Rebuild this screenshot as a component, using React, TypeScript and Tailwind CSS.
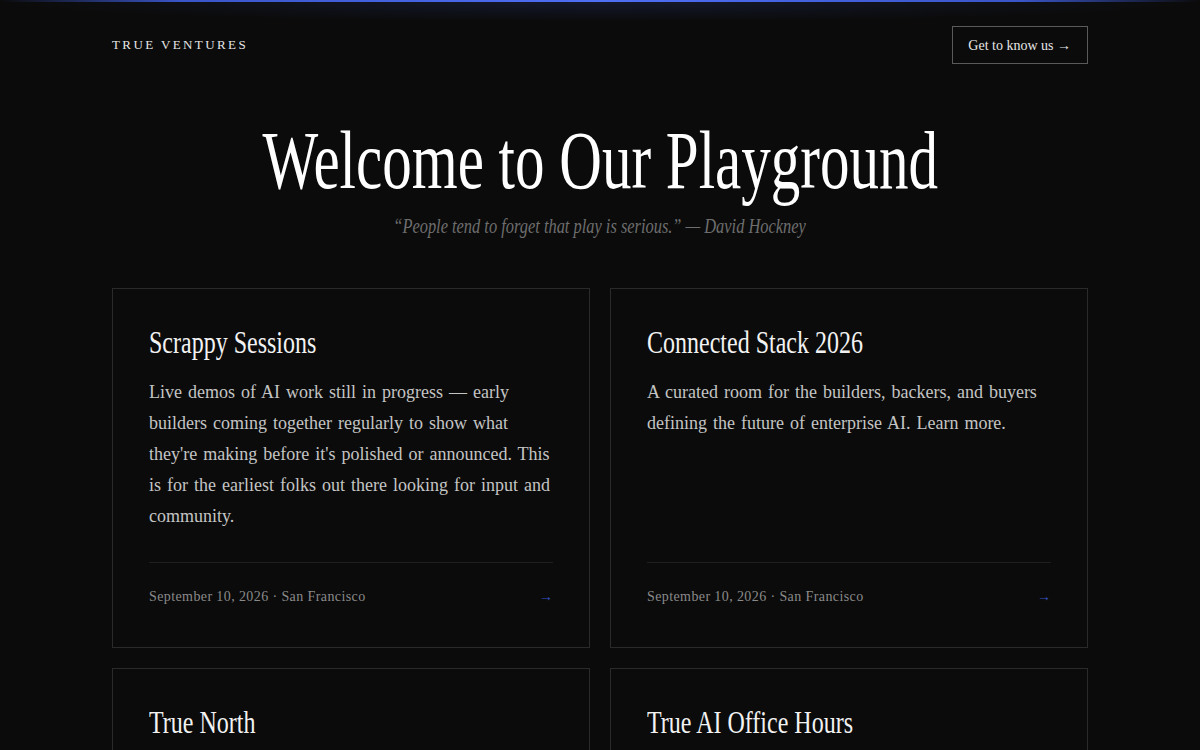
const events = [
  {
    title: "Scrappy Sessions",
    body: "Live demos of AI work still in progress — early builders coming together regularly to show what they're making before it's polished or announced. This is for the earliest folks out there looking for input and community.",
    meta: "September 10, 2026 · San Francisco",
  },
  {
    title: "Connected Stack 2026",
    body: "A curated room for the builders, backers, and buyers defining the future of enterprise AI. Learn more.",
    meta: "September 10, 2026 · San Francisco",
  },
  {
    title: "True North",
    body: "",
    meta: "",
  },
  {
    title: "True AI Office Hours",
    body: "",
    meta: "",
  },
];

// Liberation Serif squeezed horizontally stands in for the condensed display face
const serif = "font-['Liberation_Serif',serif]";

function EventCard({ title, body, meta }: (typeof events)[number]) {
  return (
    <div className="flex h-[360px] flex-col border border-[#2a2a2a] bg-[#0b0b0b] px-9 pt-[34px] pb-10">
      <h3 className={`${serif} origin-left scale-x-[0.75] whitespace-nowrap text-[32px] leading-[38px] text-[#f2f2f2]`}>
        {title}
      </h3>
      <p className={`${serif} mt-4 -mr-[6px] text-[18px] leading-[31px] [word-spacing:1.5px] text-[#c4c4c4]`}>{body}</p>
      <div className="mt-auto flex items-center justify-between border-t border-[#1f1f1f] pt-6">
        <span className={`${serif} text-[14px] leading-5 tracking-[0.4px] text-[#8a8a8a]`}>{meta}</span>
        <span className={`${serif} text-[14px] leading-5 text-[#3553c4]`}>→</span>
      </div>
    </div>
  );
}

export default function App() {
  return (
    <div className="relative min-h-[750px] overflow-hidden bg-[#0b0b0b]">
      {/* accent bar across the top */}
      <div className="h-[2px] bg-[linear-gradient(90deg,transparent,#3a55c8_15%,#4f6ff5_50%,#3a55c8_85%,transparent)]" />
      <div className="absolute inset-x-0 top-[2px] h-5 bg-[radial-gradient(ellipse_at_top,rgba(70,100,240,0.14),transparent_70%)]" />

      <div className="relative mx-auto w-[976px]">
        <header className="flex items-center justify-between pt-6">
          <span className={`${serif} text-[13px] tracking-[2.4px] text-[#e6e6e6]`}>TRUE VENTURES</span>
          <button className={`${serif} flex h-[38px] items-center border border-[#5a5a5a] pr-4 pl-[15px] text-[14px] text-[#e6e6e6]`}>
            Get to know us →
          </button>
        </header>

        <section className="mt-[52px] text-center">
          <h1 className={`${serif} inline-block scale-x-[0.72] whitespace-nowrap text-[82px] leading-[90px] text-white`}>
            Welcome to Our Playground
          </h1>
          <p className={`${serif} mt-[5px] text-[20px] italic text-[#6e6e6e]`}>
            <span className="inline-block scale-x-[0.82] whitespace-nowrap">
              “People tend to forget that play is serious.” — David Hockney
            </span>
          </p>
        </section>

        <div className="mt-[47px] grid grid-cols-2 gap-5">
          {events.map((e) => (
            <EventCard key={e.title} {...e} />
          ))}
        </div>
      </div>
    </div>
  );
}
